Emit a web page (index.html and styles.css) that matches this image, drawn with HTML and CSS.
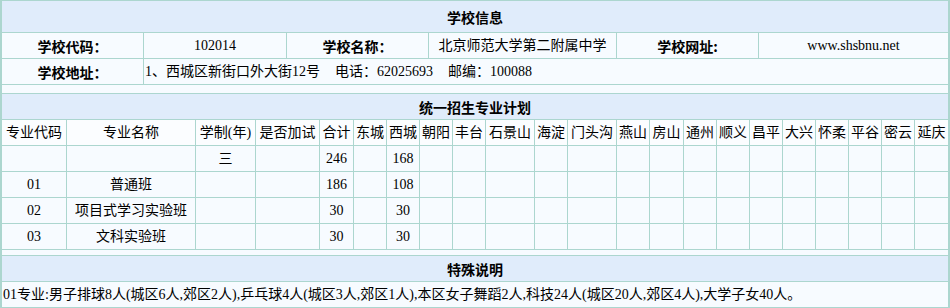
FILE: index.html
```html
<!DOCTYPE html>
<html lang="zh-CN">
<head>
<meta charset="utf-8">
<title>学校信息</title>
<link rel="stylesheet" href="styles.css">
</head>
<body>
<div class="wrap">
  <section class="grid info">
    <div class="cell head span-all">学校信息</div>
    <div class="cell label">学校代码：</div>
    <div class="cell">102014</div>
    <div class="cell label">学校名称：</div>
    <div class="cell">北京师范大学第二附属中学</div>
    <div class="cell label">学校网址:</div>
    <div class="cell">www.shsbnu.net</div>
    <div class="cell label">学校地址：</div>
    <div class="cell left span-5"><span>1、西城区新街口外大街12号</span><span class="sp">电话：62025693</span><span class="sp">邮编：100088</span></div>
  </section>

  <section class="grid plan">
    <div class="cell head span-all">统一招生专业计划</div>
    <div class="cell th">专业代码</div>
    <div class="cell th">专业名称</div>
    <div class="cell th">学制(年)</div>
    <div class="cell th">是否加试</div>
    <div class="cell th">合计</div>
    <div class="cell th">东城</div>
    <div class="cell th">西城</div>
    <div class="cell th">朝阳</div>
    <div class="cell th">丰台</div>
    <div class="cell th">石景山</div>
    <div class="cell th">海淀</div>
    <div class="cell th">门头沟</div>
    <div class="cell th">燕山</div>
    <div class="cell th">房山</div>
    <div class="cell th">通州</div>
    <div class="cell th">顺义</div>
    <div class="cell th">昌平</div>
    <div class="cell th">大兴</div>
    <div class="cell th">怀柔</div>
    <div class="cell th">平谷</div>
    <div class="cell th">密云</div>
    <div class="cell th">延庆</div>

    <div class="cell"></div><div class="cell"></div><div class="cell">三</div><div class="cell"></div><div class="cell">246</div><div class="cell"></div><div class="cell">168</div>
    <div class="cell"></div><div class="cell"></div><div class="cell"></div><div class="cell"></div><div class="cell"></div><div class="cell"></div><div class="cell"></div><div class="cell"></div><div class="cell"></div><div class="cell"></div><div class="cell"></div><div class="cell"></div><div class="cell"></div><div class="cell"></div><div class="cell"></div>

    <div class="cell">01</div><div class="cell">普通班</div><div class="cell"></div><div class="cell"></div><div class="cell">186</div><div class="cell"></div><div class="cell">108</div>
    <div class="cell"></div><div class="cell"></div><div class="cell"></div><div class="cell"></div><div class="cell"></div><div class="cell"></div><div class="cell"></div><div class="cell"></div><div class="cell"></div><div class="cell"></div><div class="cell"></div><div class="cell"></div><div class="cell"></div><div class="cell"></div><div class="cell"></div>

    <div class="cell">02</div><div class="cell">项目式学习实验班</div><div class="cell"></div><div class="cell"></div><div class="cell">30</div><div class="cell"></div><div class="cell">30</div>
    <div class="cell"></div><div class="cell"></div><div class="cell"></div><div class="cell"></div><div class="cell"></div><div class="cell"></div><div class="cell"></div><div class="cell"></div><div class="cell"></div><div class="cell"></div><div class="cell"></div><div class="cell"></div><div class="cell"></div><div class="cell"></div><div class="cell"></div>

    <div class="cell">03</div><div class="cell">文科实验班</div><div class="cell"></div><div class="cell"></div><div class="cell">30</div><div class="cell"></div><div class="cell">30</div>
    <div class="cell"></div><div class="cell"></div><div class="cell"></div><div class="cell"></div><div class="cell"></div><div class="cell"></div><div class="cell"></div><div class="cell"></div><div class="cell"></div><div class="cell"></div><div class="cell"></div><div class="cell"></div><div class="cell"></div><div class="cell"></div><div class="cell"></div>
  </section>

  <section class="grid note">
    <div class="cell head">特殊说明</div>
    <div class="cell left">01专业:男子排球8人(城区6人,郊区2人),乒乓球4人(城区3人,郊区1人),本区女子舞蹈2人,科技24人(城区20人,郊区4人),大学子女40人。</div>
  </section>
</div>
</body>
</html>
```

FILE: styles.css
```css
html, body {
  margin: 0;
  padding: 0;
  background: #f7fbff;
}

body {
  font-family: "Liberation Serif", "Noto Sans CJK SC", serif;
  font-size: 14px;
  color: #000;
}

.wrap {
  width: 946px;
  height: 308px;
  border-left: 2px solid #acd6cf;
  border-right: 2px solid #acd6cf;
  display: flex;
  flex-direction: column;
  background: #f7fbff;
}

.grid {
  display: grid;
  gap: 1px;
  padding: 1px 0;
  background: #acd6cf;
}

.info {
  grid-template-columns: 141px 142px 141px 187px 141px 189px;
  grid-template-rows: 31px 25px 25px;
}

.plan {
  margin-top: 8px;
  grid-template-columns: 64px 128px 59px 63px 33px 32px 32px 32px 32px 48px 32px 48px 32px 33px 32px 32px 32px 32px 32px 32px 32px 33px;
  grid-template-rows: repeat(6, 25px);
}

.note {
  margin-top: 5px;
  grid-template-columns: 1fr;
  grid-template-rows: 25px 25px;
}

.cell {
  background: #f7fbff;
  display: flex;
  align-items: center;
  justify-content: center;
  white-space: nowrap;
  overflow: hidden;
  line-height: 1;
}

.head {
  background: #e0ecfb;
  font-family: "Noto Sans CJK SC", sans-serif;
  font-weight: bold;
  font-size: 14px;
}

.span-all {
  grid-column: 1 / -1;
}

.span-5 {
  grid-column: 2 / -1;
}

.label {
  font-family: "Noto Sans CJK SC", sans-serif;
  font-weight: bold;
}

.th {
  background: #fbfdff;
}

.left {
  justify-content: flex-start;
  padding-left: 1px;
}

.sp {
  margin-left: 15px;
}
```
